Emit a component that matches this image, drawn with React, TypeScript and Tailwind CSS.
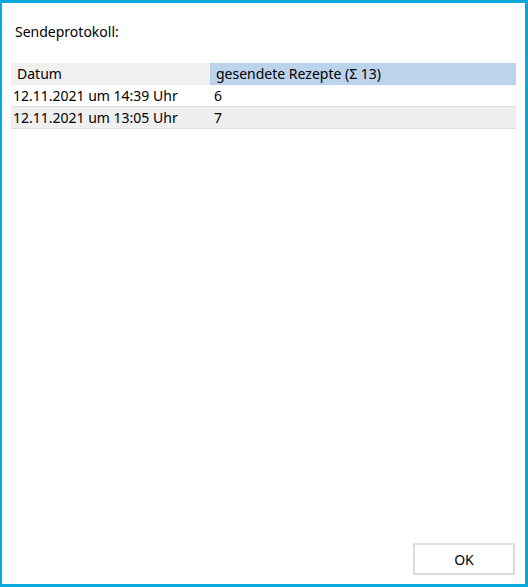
const rows = [
  { datum: '12.11.2021 um 14:39 Uhr', anzahl: '6' },
  { datum: '12.11.2021 um 13:05 Uhr', anzahl: '7' },
];

export default function App() {
  return (
    <div
      className="flex h-[587px] w-[528px] flex-col border-t-[3px] border-r-[3px] border-b-[3px] border-l-2 border-[#0aa9db] bg-white text-[14px] text-black"
      style={{ fontFamily: '"Noto Sans", "Segoe UI", sans-serif' }}
    >
      <div className="pl-[13px] pt-[19px] leading-[20px]">Sendeprotokoll:</div>

      <div className="mt-[21px] ml-[9px] mr-[9px]">
        <div className="flex h-[22px] leading-[22px]">
          <div className="w-[199px] bg-[#f0f0f0] pl-[6px]">Datum</div>
          <div className="flex-1 bg-[#bcd3ec] pl-[6px]">gesendete Rezepte (Σ 13)</div>
        </div>
        {rows.map((r, i) => (
          <div
            key={r.datum}
            className={
              'flex h-[22px] border-b border-[#dcdcdc] leading-[21px] ' +
              (i % 2 === 1 ? 'bg-[#efefef]' : 'bg-white')
            }
          >
            <div className="w-[199px] pl-[2px]">{r.datum}</div>
            <div className="flex-1 pl-[4px]">{r.anzahl}</div>
          </div>
        ))}
      </div>

      <div className="mt-auto flex justify-end pr-[10px] pb-[9px]">
        <button className="h-[32px] w-[102px] border-2 border-[#dcdcdc] bg-white text-[14px]">OK</button>
      </div>
    </div>
  );
}
